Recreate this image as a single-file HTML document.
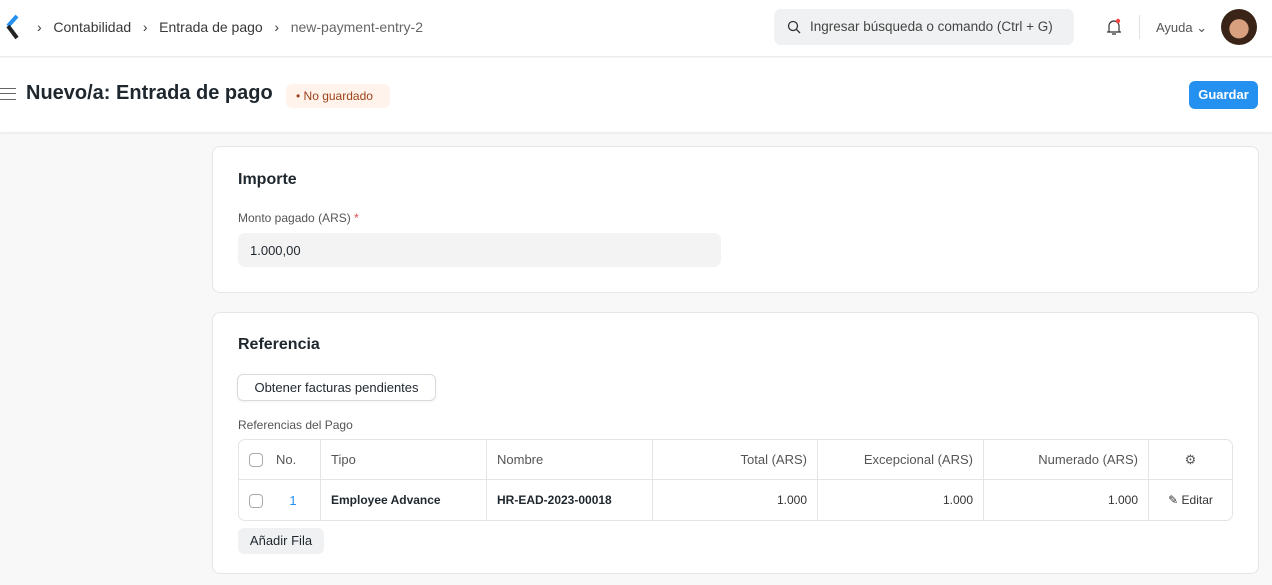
<!DOCTYPE html><html><head><meta charset="utf-8"><style>
*{box-sizing:border-box;margin:0;padding:0}
body{width:1272px;height:585px;overflow:hidden;background:#f8f8f8;font-family:"Liberation Sans",sans-serif;color:#1f272e;position:relative}
.nav{position:absolute;top:0;left:0;width:1272px;height:57px;background:#fff;border-bottom:1px solid #ececec}
.ph{position:absolute;top:58px;left:0;width:1272px;height:74px;background:#fff;box-shadow:0 1px 3px rgba(0,0,0,.08)}
.abs{position:absolute}
.card{position:absolute;left:212px;width:1047px;background:#fff;border:1px solid #e4e6e9;border-radius:8px}
.t{font-size:13px;color:#383838}
table{border-collapse:separate;border-spacing:0;position:absolute;left:238px;top:439px;width:995px;border:1px solid #e2e4e7;border-radius:7px;font-size:13px}
td{height:40px;border-right:1px solid #e2e4e7;padding:0 10px;color:#555}
tr:first-child td{border-bottom:1px solid #e2e4e7}
td:last-child{border-right:none}
.cb{width:14px;height:14px;border:1px solid #aaa;border-radius:4px;display:inline-block;vertical-align:middle}
.r{text-align:right}
</style></head><body>
<div class="nav">
<svg class="abs" style="left:4px;top:14px" width="16" height="26"><path d="M13 2 L4 12" stroke="#2490ef" stroke-width="4"/><path d="M4 12 L13 24" stroke="#222" stroke-width="4"/></svg>
<div class="abs t" style="left:37px;top:19px;font-size:14px">›&nbsp;&nbsp; Contabilidad &nbsp;&nbsp;›&nbsp;&nbsp; Entrada de pago &nbsp;&nbsp;›&nbsp;&nbsp; <span style="color:#666">new-payment-entry-2</span></div>
<div class="abs" style="left:774px;top:9px;width:300px;height:36px;background:#f0f1f2;border-radius:7px"><svg class="abs" style="left:13px;top:11px" width="14" height="14"><circle cx="6" cy="6" r="4.5" stroke="#333" fill="none" stroke-width="1.3"/><path d="M9.5 9.5 L13 13" stroke="#333" stroke-width="1.3"/></svg><span class="abs t" style="left:36px;top:10px;font-size:13.5px;color:#444">Ingresar búsqueda o comando (Ctrl + G)</span></div>
<svg class="abs" style="left:1105px;top:18px" width="18" height="18"><path d="M4 14 V8 a5 5 0 0 1 10 0 V14 Z M2 14 H16 M7 16 H11" stroke="#333" fill="none" stroke-width="1.2"/><circle cx="13" cy="3" r="2.2" fill="#f44"/></svg>
<div class="abs" style="left:1139px;top:15px;width:1px;height:24px;background:#e2e2e2"></div>
<div class="abs t" style="left:1156px;top:20px;font-size:13px;color:#555">Ayuda ⌄</div>
<div class="abs" style="left:1221px;top:9px;width:36px;height:36px;border-radius:50%;background:radial-gradient(circle at 50% 55%,#d9a07f 0 35%,#3a2418 37%)"></div>
</div>
<div class="ph">
<div class="abs" style="left:0;top:30px;width:16px;height:12px;border-top:1.5px solid #666;border-bottom:1.5px solid #666"><div style="margin-top:4px;border-top:1.5px solid #666"></div></div>
<div class="abs" style="left:26px;top:24px;font-size:20px;font-weight:bold;color:#1f272e">Nuevo/a: Entrada de pago</div>
<div class="abs" style="left:286px;top:26px;width:104px;height:24px;background:#fff3ec;border-radius:6px;font-size:12px;color:#9c4319;padding:5px 0 0 10px">• No guardado</div>
<div class="abs" style="left:1189px;top:23px;width:69px;height:28px;background:#2490ef;border-radius:6px;color:#fff;font-size:13px;font-weight:bold;text-align:center;line-height:28px">Guardar</div>
</div>
<div class="card" style="top:146px;height:147px">
<div class="abs" style="left:25px;top:24px;font-size:16px;font-weight:bold">Importe</div>
<div class="abs" style="left:25px;top:64px;font-size:12px;color:#555">Monto pagado (ARS) <span style="color:#e24c4c">*</span></div>
<div class="abs" style="left:25px;top:86px;width:483px;height:34px;background:#f3f3f3;border-radius:7px;font-size:13px;padding:10px 12px">1.000,00</div>
</div>
<div class="card" style="top:312px;height:262px">
<div class="abs" style="left:25px;top:23px;font-size:16px;font-weight:bold">Referencia</div>
<div class="abs" style="left:24px;top:61px;width:199px;height:27px;border:1px solid #d8dadd;border-radius:6px;font-size:13px;text-align:center;line-height:25px;box-shadow:0 1px 2px rgba(0,0,0,.06)">Obtener facturas pendientes</div>
<div class="abs" style="left:25px;top:105px;font-size:12px;color:#555">Referencias del Pago</div>
<div class="abs" style="left:25px;top:215px;width:86px;height:26px;background:#f0f1f2;border-radius:6px;font-size:13px;text-align:center;line-height:26px">Añadir Fila</div>
</div>
<table>
<tr><td style="width:27px;padding:0 0 0 10px;border-right:none"><span class="cb"></span></td><td style="width:55px">No.</td><td style="width:166px">Tipo</td><td style="width:166px">Nombre</td><td class="r" style="width:165px">Total (ARS)</td><td class="r" style="width:166px">Excepcional (ARS)</td><td class="r" style="width:165px">Numerado (ARS)</td><td style="text-align:center">⚙</td></tr>
<tr><td style="padding:0 0 0 10px;border-right:none;border-bottom:none"><span class="cb"></span></td><td style="text-align:center;color:#2490ef;border-bottom:none">1</td><td style="font-weight:bold;color:#1f272e;font-size:12px;border-bottom:none">Employee Advance</td><td style="font-weight:bold;color:#1f272e;font-size:12px;border-bottom:none">HR-EAD-2023-00018</td><td class="r" style="font-size:12px;color:#333">1.000</td><td class="r" style="font-size:12px;color:#333">1.000</td><td class="r" style="font-size:12px;color:#333">1.000</td><td style="text-align:center;font-size:12px;color:#333">✎ Editar</td></tr>
</table>
</body></html>
